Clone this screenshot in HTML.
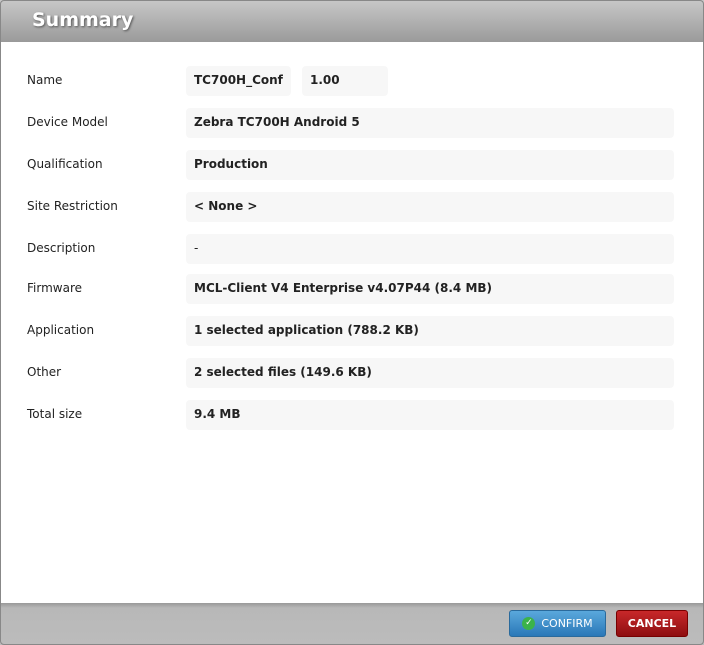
<!DOCTYPE html>
<html><head><style>
*{margin:0;padding:0;box-sizing:border-box}
body{width:704px;height:645px;background:#fff;font-family:"DejaVu Sans",Verdana,sans-serif;position:relative;overflow:hidden}
.frame{position:absolute;left:0;top:0;width:704px;height:645px;overflow:hidden;background:#fff}
.bd{position:absolute;left:0;top:0;width:704px;height:645px;border:1px solid #888;border-radius:4px;pointer-events:none}
.hdr{position:absolute;left:0;top:0;width:704px;height:42px;background:linear-gradient(#c8c8c8,#9a9a9a)}
.hdr span{position:absolute;left:32px;top:9px;color:#fff;font-size:19px;font-weight:bold;text-shadow:1px 1px 2px #555}
.lbl{position:absolute;left:27px;font-size:12px;color:#222;line-height:14px}
.fld{position:absolute;left:186px;width:488px;height:30px;background:#f7f7f7;border-radius:4px;font-size:12px;font-weight:bold;color:#222;padding:0 8px;line-height:29px}
.ftr{position:absolute;left:0;top:603px;width:704px;height:42px;background:linear-gradient(#999 0,#b8b8b8 5px,#bcbcbc)}
.btn{position:absolute;top:610px;height:27px;border-radius:3px;font-size:11px;color:#fff;display:flex;align-items:center;justify-content:center}
</style></head><body>
<div class="frame">
<div class="hdr"><span>Summary</span></div>
<div class="lbl" style="top:73px">Name</div>
<div class="fld" style="top:66px;width:105px">TC700H_Conf</div>
<div class="fld" style="top:66px;left:302px;width:86px">1.00</div>
<div class="lbl" style="top:115px">Device Model</div><div class="fld" style="top:108px">Zebra TC700H Android 5</div>
<div class="lbl" style="top:157px">Qualification</div><div class="fld" style="top:150px">Production</div>
<div class="lbl" style="top:199px">Site Restriction</div><div class="fld" style="top:192px">&lt; None &gt;</div>
<div class="lbl" style="top:241px">Description</div><div class="fld" style="top:234px;font-weight:normal">-</div>
<div class="lbl" style="top:281px">Firmware</div><div class="fld" style="top:274px">MCL-Client V4 Enterprise v4.07P44 (8.4 MB)</div>
<div class="lbl" style="top:323px">Application</div><div class="fld" style="top:316px">1 selected application (788.2 KB)</div>
<div class="lbl" style="top:365px">Other</div><div class="fld" style="top:358px">2 selected files (149.6 KB)</div>
<div class="lbl" style="top:407px">Total size</div><div class="fld" style="top:400px">9.4 MB</div>
<div class="ftr"></div>
<div class="btn" style="left:509px;width:97px;background:linear-gradient(#5aa8dc,#2a78b8);border:1px solid #2a6a9c"><span style="display:inline-block;width:13px;height:13px;border-radius:50%;background:#3bb34a;color:#fff;font-size:9px;line-height:13px;text-align:center;margin-right:6px">✓</span>CONFIRM</div>
<div class="btn" style="left:616px;width:72px;background:linear-gradient(#c8282a,#8e0e10);border:1px solid #700;font-weight:bold">CANCEL</div>
</div>
<div class="bd"></div>
</body></html>
